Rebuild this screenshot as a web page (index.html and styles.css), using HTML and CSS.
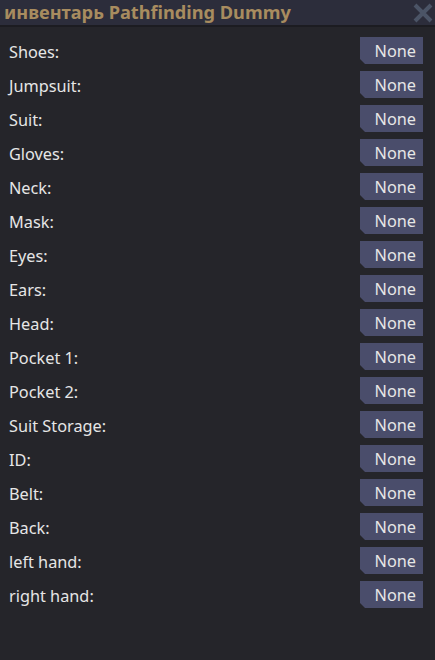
FILE: index.html
```html
<!DOCTYPE html>
<html>
<head>
<meta charset="utf-8">
<link rel="stylesheet" href="styles.css">
</head>
<body>
<div class="window">
  <div class="titlebar">
    <span class="title">инвентарь Pathfinding Dummy</span>
    <svg class="close" width="20" height="20" viewBox="0 0 20 20"><path d="M2 2 L18 18 M18 2 L2 18" stroke="#4b5466" stroke-width="4"/></svg>
  </div>
  <div class="content">
    <div class="row"><span class="label">Shoes:</span><span class="btn">None</span></div>
    <div class="row"><span class="label">Jumpsuit:</span><span class="btn">None</span></div>
    <div class="row"><span class="label">Suit:</span><span class="btn">None</span></div>
    <div class="row"><span class="label">Gloves:</span><span class="btn">None</span></div>
    <div class="row"><span class="label">Neck:</span><span class="btn">None</span></div>
    <div class="row"><span class="label">Mask:</span><span class="btn">None</span></div>
    <div class="row"><span class="label">Eyes:</span><span class="btn">None</span></div>
    <div class="row"><span class="label">Ears:</span><span class="btn">None</span></div>
    <div class="row"><span class="label">Head:</span><span class="btn">None</span></div>
    <div class="row"><span class="label">Pocket 1:</span><span class="btn">None</span></div>
    <div class="row"><span class="label">Pocket 2:</span><span class="btn">None</span></div>
    <div class="row"><span class="label">Suit Storage:</span><span class="btn">None</span></div>
    <div class="row"><span class="label">ID:</span><span class="btn">None</span></div>
    <div class="row"><span class="label">Belt:</span><span class="btn">None</span></div>
    <div class="row"><span class="label">Back:</span><span class="btn">None</span></div>
    <div class="row"><span class="label">left hand:</span><span class="btn">None</span></div>
    <div class="row"><span class="label">right hand:</span><span class="btn">None</span></div>
  </div>
</div>
</body>
</html>
```
FILE: styles.css
```css
html, body {
  margin: 0;
  padding: 0;
  background: #25252a;
}
.window {
  width: 435px;
  height: 660px;
  background: #25252a;
  font-family: "Noto Sans", "DejaVu Sans", sans-serif;
  color: #e6e6e6;
}
.titlebar {
  height: 25px;
  background: #2c2d3b;
  border-bottom: 2px solid #1c1c21;
  display: flex;
  align-items: center;
  justify-content: space-between;
  padding: 0 2px 0 4px;
}
.title {
  color: #a88c5f;
  font-weight: bold;
  font-size: 18.2px;
  line-height: 25px;
}
.close {
  display: block;
  margin-top: 1px;
}
.content {
  padding: 10px 12px 0 9px;
  display: flex;
  flex-direction: column;
  gap: 7px;
}
.row {
  display: flex;
  align-items: center;
  justify-content: space-between;
  height: 27px;
}
.label {
  font-size: 16.3px;
  padding-top: 2px;
}
.btn {
  width: 63px;
  height: 27px;
  box-sizing: border-box;
  background: #4a4d6b;
  clip-path: polygon(0 0, 100% 0, 100% 100%, 5px 100%, 0 calc(100% - 5px));
  font-size: 16.3px;
  line-height: 27px;
  text-align: right;
  padding-top: 1px;
  padding-right: 7px;
}
```
